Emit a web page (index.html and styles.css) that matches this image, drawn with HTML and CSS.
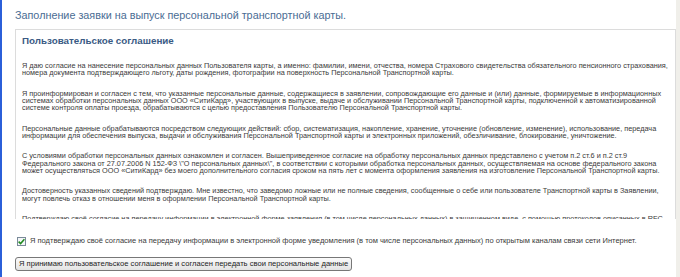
FILE: index.html
```html
<!DOCTYPE html>
<html lang="ru">
<head>
<meta charset="utf-8">
<link rel="stylesheet" href="styles.css">
</head>
<body>
<div class="page">
  <h1 class="title">Заполнение заявки на выпуск персональной транспортной карты.</h1>
  <div class="agreement">
    <h2 class="agreement-title">Пользовательское соглашение</h2>
    <p>Я даю согласие на нанесение персональных данных Пользователя карты, а именно: фамилии, имени, отчества, номера Страхового свидетельства обязательного пенсионного страхования, номера документа подтверждающего льготу, даты рождения, фотографии на поверхность Персональной Транспортной карты.</p>
    <p>Я проинформирован и согласен с тем, что указанные персональные данные, содержащиеся в заявлении, сопровождающие его данные и (или) данные, формируемые в информационных системах обработки персональных данных ООО «СитиКард», участвующих в выпуске, выдаче и обслуживании Персональной Транспортной карты, подключенной к автоматизированной системе контроля оплаты проезда, обрабатываются с целью предоставления Пользователю Персональной Транспортной карты.</p>
    <p>Персональные данные обрабатываются посредством следующих действий: сбор, систематизация, накопление, хранение, уточнение (обновление, изменение), использование, передача информации для обеспечения выпуска, выдачи и обслуживания Персональной Транспортной карты и электронных приложений, обезличивание, блокирование, уничтожение.</p>
    <p>С условиями обработки персональных данных ознакомлен и согласен. Вышеприведенное согласие на обработку персональных данных представлено с учетом п.2 ст.6 и п.2 ст.9 Федерального закона от 27.07.2006 N 152-ФЗ \"О персональных данных\", в соответствии с которыми обработка персональных данных, осуществляемая на основе федерального закона может осуществляться ООО «СитиКард» без моего дополнительного согласия сроком на пять лет с момента оформления заявления на изготовление Персональной Транспортной карты.</p>
    <p>Достоверность указанных сведений подтверждаю. Мне известно, что заведомо ложные или не полные сведения, сообщенные о себе или пользователе Транспортной карты в Заявлении, могут повлечь отказ в отношении меня в оформлении Персональной Транспортной карты.</p>
    <p>Подтверждаю своё согласие на передачу информации в электронной форме заявления (в том числе персональных данных) в защищенном виде, с помощью протоколов описанных в RFC 2246 и RFC 4346, по открытым каналам связи сети Интернет.</p>
  </div>
  <label class="confirm">
    <span class="checkbox"><svg viewBox="0 0 9 9" width="9" height="9"><path d="M1.6 4.6 L3.6 6.6 L7.4 2.2" fill="none" stroke="#1f8a1f" stroke-width="1.5"/></svg></span>
    <span class="confirm-text">Я подтверждаю своё согласие на передачу информации в электронной форме уведомления (в том числе персональных данных) по открытым каналам связи сети Интернет.</span>
  </label>
  <button class="accept" type="button">Я принимаю пользовательское соглашение и согласен передать свои персональные данные</button>
</div>
</body>
</html>
```

FILE: styles.css
```css
html, body {
  margin: 0;
  padding: 0;
  background: #ffffff;
}
body {
  font-family: "Liberation Sans", Arial, sans-serif;
  height: 277px;
  overflow: hidden;
}
.page {
  box-sizing: border-box;
  height: 277px;
  width: 680px;
  border-left: 2px solid #2b5fd9;
  border-right: 4px solid #f0efea;
  padding: 8px 0 0 13px;
}
.title {
  margin: 0;
  font-size: 10.8px;
  font-weight: normal;
  color: #4a6c93;
  line-height: 15px;
}
.agreement {
  box-sizing: border-box;
  margin-top: 6px;
  height: 190px;
  overflow: hidden;
  border: 1px solid #dcdcdc;
  border-bottom: none;
  padding: 4px 3px 0 6px;
  color: #3a3a3a;
}
.agreement-title {
  margin: 0 0 15px 0;
  font-size: 9.8px;
  font-weight: bold;
  color: #3a5a84;
  line-height: 13px;
}
.agreement p {
  margin: 0 0 12.8px 0;
  font-size: 7.3px;
  line-height: 7.4px;
}
.confirm {
  display: flex;
  align-items: center;
  gap: 4px;
  margin-top: 17px;
  margin-left: 2px;
  font-size: 7.5px;
  line-height: 10px;
  color: #3a3a3a;
}
.checkbox {
  box-sizing: border-box;
  flex: none;
  width: 9px;
  height: 9px;
  border: 1px solid #7a8a99;
  background: #f4f6f8;
  display: flex;
}
.checkbox svg {
  margin: -1px;
}
.accept {
  display: block;
  margin-top: 11px;
  font-family: "Liberation Sans", Arial, sans-serif;
  font-size: 7.6px;
  color: #222;
  padding: 0 3px;
  height: 14px;
  line-height: 10px;
  border: 1px solid #777;
  border-radius: 3px;
  background: linear-gradient(#fbfbfb, #e3e3e3);
}
```
